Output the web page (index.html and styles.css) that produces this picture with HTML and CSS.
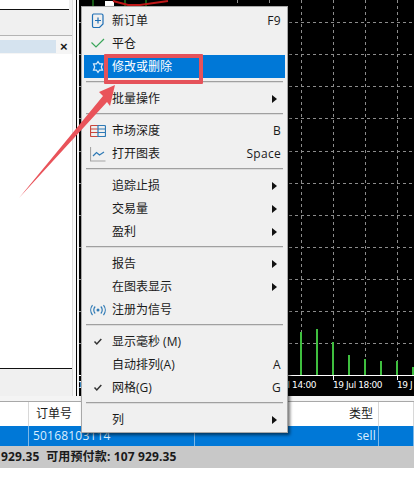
FILE: index.html
```html
<!DOCTYPE html>
<html lang="zh">
<head>
    <meta charset="UTF-8">
    <title>MT4 订单菜单</title>
    <link rel="stylesheet" href="styles.css">
</head>
<body>

    <div class="terminal">
        <div class="workspace">
            <aside class="side-panel">
                <div class="side-top"></div>
                <div class="side-gray"></div>
                <div class="side-title">
                    <div class="side-title-bar"></div>
                    <span class="side-close">×</span>
                </div>
                <div class="side-body"></div>
                <div class="side-foot"></div>
            </aside>
            <div class="side-gap"></div>

            <div class="chart">
                <svg class="chart-svg" width="335" height="396" viewBox="79 0 335 396">
                    <g class="grid">
                        <path d="M79 22.5H414M79 54.5H414M79 86.5H414M79 118.5H414M79 151.5H414M79 183.5H414M79 215.5H414M79 247.5H414M79 279.5H414M79 311.5H414M79 343.5H414"/>
                        <path d="M237.5 0V375M269.5 0V375M301.5 0V375M333.5 0V375M365.5 0V375M397.5 0V375"/>
                    </g>
                    <g class="bars">
                        <rect x="300" y="332" width="2" height="43"/>
                        <rect x="316" y="329" width="2" height="46"/>
                        <rect x="332" y="342" width="2" height="33"/>
                        <rect x="348" y="355" width="2" height="20"/>
                        <rect x="364" y="359" width="2" height="16"/>
                        <rect x="380" y="361" width="2" height="14"/>
                        <rect x="396" y="361" width="2" height="14"/>
                        <rect x="412" y="367" width="2" height="8"/>
                    </g>
                    <path class="axis" d="M79 375.500H414M333.500 375V380M397.500 375V380M237.500 375V380M269.500 375V380"/>
                    <text class="axis-label" x="280" y="388">Jul 14:00</text>
                    <text class="axis-label" x="333" y="388">19 Jul 18:00</text>
                    <text class="axis-label" x="397" y="388">19 J</text>
                    <text class="axis-label" x="78" y="388">1</text>
                </svg>
                <svg class="chart-top" width="130" height="6" viewBox="0 0 130 6">
                    <path class="candle-wick" d="M13 0V6M45 0V6M66 0V6"/>
                    <rect class="candle-body" x="25" y="1" width="9" height="5"/>
                    <path class="trend" d="M33 1L48 5L60 5L88 1"/>
                </svg>
            </div>

            <ul class="menu">
                <li class="menu-item">
                    <svg class="menu-icon" width="16" height="16" viewBox="0 0 16 16"><path class="ico-doc" d="M3.500 1h8a1.500 1.500 0 0 1 1.500 1.500v8.500l-3.500 3.500h-6a1.500 1.500 0 0 1-1-1.500v-10.500a1.500 1.500 0 0 1 1-1.500zM8 4.500v6M5 7.500h6"/></svg>
                    <span class="menu-label">新订单</span><span class="menu-key">F9</span>
                </li>
                <li class="menu-item">
                    <svg class="menu-icon" width="16" height="16" viewBox="0 0 16 16"><path class="ico-check" d="M1.500 6.500l4.500 4.500l8-8"/></svg>
                    <span class="menu-label">平仓</span>
                </li>
                <li class="menu-item is-active">
                    <svg class="menu-icon" width="16" height="16" viewBox="0 0 16 16"><path class="ico-gear" d="M8 2.500l1.500 2.300h3l-1.200 3.200l1.200 3.200h-3L8 13.500l-1.500-2.300h-3l1.200-3.200l-1.200-3.200h3z"/></svg>
                    <span class="menu-label">修改或删除</span>
                </li>
                <li class="menu-sep"></li>
                <li class="menu-item">
                    <span class="menu-icon"></span>
                    <span class="menu-label">批量操作</span><span class="menu-arrow"></span>
                </li>
                <li class="menu-sep"></li>
                <li class="menu-item">
                    <svg class="menu-icon" width="16" height="16" viewBox="0 0 16 16"><path class="ico-red" d="M8 2.500H1.500a1 1 0 0 0 -1 1v9a1 1 0 0 0 1 1H8M1 6h7M1 9.500h7"/><path class="ico-blue" d="M8 2.500h6.500a1 1 0 0 1 1 1v9a1 1 0 0 1-1 1H8zM8 6h7M8 9.500h7"/></svg>
                    <span class="menu-label">市场深度</span><span class="menu-key">B</span>
                </li>
                <li class="menu-item">
                    <svg class="menu-icon" width="16" height="16" viewBox="0 0 16 16"><path class="ico-axes" d="M0.500 1v14h15"/><path class="ico-blue" d="M3 10l3.500-3.500l3 2.500l4.500-3"/></svg>
                    <span class="menu-label">打开图表</span><span class="menu-key">Space</span>
                </li>
                <li class="menu-sep"></li>
                <li class="menu-item"><span class="menu-icon"></span><span class="menu-label">追踪止损</span><span class="menu-arrow"></span></li>
                <li class="menu-item"><span class="menu-icon"></span><span class="menu-label">交易量</span><span class="menu-arrow"></span></li>
                <li class="menu-item"><span class="menu-icon"></span><span class="menu-label">盈利</span><span class="menu-arrow"></span></li>
                <li class="menu-sep"></li>
                <li class="menu-item"><span class="menu-icon"></span><span class="menu-label">报告</span><span class="menu-arrow"></span></li>
                <li class="menu-item"><span class="menu-icon"></span><span class="menu-label">在图表显示</span><span class="menu-arrow"></span></li>
                <li class="menu-item">
                    <svg class="menu-icon" width="16" height="16" viewBox="0 0 16 16"><circle class="ico-dot" cx="8" cy="8" r="1.500"/><path class="ico-blue" d="M5.200 4.500a5 5 0 0 0 0 7M10.800 4.500a5 5 0 0 1 0 7M2.500 3a8 8 0 0 0 0 10M13.500 3a8 8 0 0 1 0 10"/></svg>
                    <span class="menu-label">注册为信号</span>
                </li>
                <li class="menu-sep"></li>
                <li class="menu-item">
                    <svg class="menu-icon" width="16" height="16" viewBox="0 0 16 16"><path class="ico-tick" d="M4.500 7.500l2.300 2.500l4.500-5"/></svg>
                    <span class="menu-label">显示毫秒 (M)</span>
                </li>
                <li class="menu-item"><span class="menu-icon"></span><span class="menu-label">自动排列(A)</span><span class="menu-key">A</span></li>
                <li class="menu-item">
                    <svg class="menu-icon" width="16" height="16" viewBox="0 0 16 16"><path class="ico-tick" d="M4.500 7.500l2.300 2.500l4.500-5"/></svg>
                    <span class="menu-label">网格(G)</span><span class="menu-key">G</span>
                </li>
                <li class="menu-sep"></li>
                <li class="menu-item"><span class="menu-icon"></span><span class="menu-label">列</span><span class="menu-arrow"></span></li>
            </ul>

            <div class="callout-box"></div>
            <svg class="callout-arrow" width="120" height="125" viewBox="0 80 120 125">
                <path d="M19 198L103 96L99 92L115 85L110 106L107 102Z"/>
            </svg>
        </div>

        <div class="divider"></div>

        <div class="orders">
            <div class="orders-row orders-head">
                <div class="cell"></div>
                <div class="cell">订单号</div>
                <div class="cell cell-right">类型</div>
                <div class="cell"></div>
            </div>
            <div class="orders-row orders-selected">
                <div class="cell"></div>
                <div class="cell">50168103114</div>
                <div class="cell cell-right">sell</div>
                <div class="cell"></div>
            </div>
        </div>

        <div class="status">929.35&nbsp; 可用预付款: 107 929.35</div>
    </div>

</body>
</html>
```

FILE: styles.css
```css
* {
    box-sizing: border-box;
}

body {
    margin: 0;
    background: white;
    font-family: "Open Sans", "Noto Sans CJK SC", sans-serif;
    font-size: 12px;
    color: #1a1a1a;
    overflow: hidden;
}

.terminal {
    width: 414px;
    height: 503px;
}

.workspace {
    position: relative;
    display: flex;
    height: 396px;
    background: #f0f0f0;
}

/* left window */
.side-panel {
    width: 73px;
    display: flex;
    flex-direction: column;
    background: #f0f0f0;
    border-right: 1px solid #dcdcdc;
}

.side-top {
    height: 10px;
    margin-right: 3px;
    background: white;
    border-bottom: 1px solid #111;
}

.side-gray {
    height: 26px;
    border-bottom: 1px solid #b4b4b4;
}

.side-title {
    display: flex;
    align-items: center;
    height: 18px;
    padding-top: 2px;
    background: #f5f5f5;
}

.side-title-bar {
    width: 56px;
    height: 13px;
    background: #d5e3ef;
}

.side-close {
    margin-left: 4px;
    font-family: "Liberation Sans", sans-serif;
    font-size: 13px;
    font-weight: bold;
    line-height: 13px;
}

.side-body {
    height: 315px;
    background: white;
    border-bottom: 1px solid #111;
}

.side-foot {
    flex: 1;
    background: #f0f0f0;
}

.side-gap {
    width: 6px;
    background: linear-gradient(90deg, #f8f8f8 0 3px, #000 3px 4px, #f4f4f4 4px);
}

/* chart */
.chart {
    position: relative;
    width: 335px;
    background: black;
}

.chart-svg {
    display: block;
}

.chart-top {
    position: absolute;
    left: 1px;
    top: 0;
}

.grid path {
    fill: none;
    stroke: #8c8c8c;
    stroke-dasharray: 3 3;
}

.bars rect {
    fill: #3fbf3f;
}

.axis {
    fill: none;
    stroke: white;
}

.axis-label {
    fill: white;
    font-family: "DejaVu Sans", sans-serif;
    font-size: 9px;
    letter-spacing: -0.4px;
}

.candle-wick {
    fill: none;
    stroke: #2fb52f;
}

.candle-body {
    fill: white;
}

.trend {
    fill: none;
    stroke: #c01818;
    stroke-width: 2;
}

/* context menu */
.menu {
    position: absolute;
    left: 81px;
    top: 6px;
    width: 207px;
    height: 427px;
    margin: 0;
    padding: 2px;
    list-style: none;
    background: #f0f0f0;
    border: 1px solid #a8a8a8;
    box-shadow: 2px 2px 3px rgba(0, 0, 0, 0.55);
}

.menu-item {
    display: flex;
    align-items: center;
    height: 23px;
    padding-left: 6px;
    line-height: 23px;
}

.menu-item.is-active {
    background: #0078d7;
    color: white;
}

.menu-icon {
    display: block;
    flex: none;
    width: 16px;
    height: 16px;
    margin-right: 6px;
}

.menu-label {
    flex: 1;
}

.menu-key {
    margin-right: 4px;
    letter-spacing: 0.3px;
}

.menu-arrow {
    width: 0;
    height: 0;
    margin-right: 8px;
    border-left: 5px solid #111;
    border-top: 4px solid transparent;
    border-bottom: 4px solid transparent;
}

.menu-sep {
    height: 9px;
    margin: 0 2px;
    padding-top: 3px;
}

.menu-sep::before {
    content: "";
    display: block;
    height: 1px;
    background: #a0a0a0;
    box-shadow: 0 1px 0 #dcdcdc;
}

.menu-icon path,
.menu-icon circle {
    fill: none;
    stroke-width: 1.2;
}

.menu-icon .ico-doc { stroke: #1f6fb5; }
.menu-icon .ico-check { stroke: #3aa65a; }
.menu-icon .ico-gear { stroke: #dcecfa; }
.menu-icon .ico-red { stroke: #c8463c; }
.menu-icon .ico-blue { stroke: #2f7ab5; }
.menu-icon .ico-axes { stroke: #a4a4a4; }
.menu-icon .ico-tick { stroke: #333; stroke-width: 1.5; }
.menu-icon .ico-dot { fill: #2f7ab5; stroke: none; }

/* annotation */
.callout-box {
    position: absolute;
    left: 104px;
    top: 54px;
    width: 99px;
    height: 30px;
    border: 4px solid #e5525a;
    border-radius: 1px;
}

.callout-arrow {
    position: absolute;
    left: 0;
    top: 80px;
}

.callout-arrow path {
    fill: #e9535a;
}

/* bottom table */
.divider {
    height: 6px;
    background: #f4f4f4;
    border-bottom: 1px solid #a8a8a8;
}

.orders-row {
    display: grid;
    grid-template-columns: 29px 166px 184px 35px;
}

.cell {
    padding-left: 7px;
    border-right: 1px solid #d8d8d8;
    white-space: nowrap;
}

.cell-right {
    padding-right: 5px;
    text-align: right;
}

.orders-head {
    height: 24px;
    line-height: 24px;
    background: white;
}

.orders-selected {
    height: 20px;
    line-height: 20px;
    background: #0078d7;
    color: #dbeeff;
    letter-spacing: 0.2px;
}

.orders-selected .cell {
    padding-left: 4px;
    border-right-color: #7db8e8;
}

.orders-selected .cell-right {
    padding-right: 2px;
}

.status {
    height: 22px;
    padding-left: 1px;
    line-height: 22px;
    background: #c8c8c8;
    font-family: "Noto Sans", "Noto Sans CJK SC", sans-serif;
    font-weight: bold;
    letter-spacing: 0.15px;
}
```
